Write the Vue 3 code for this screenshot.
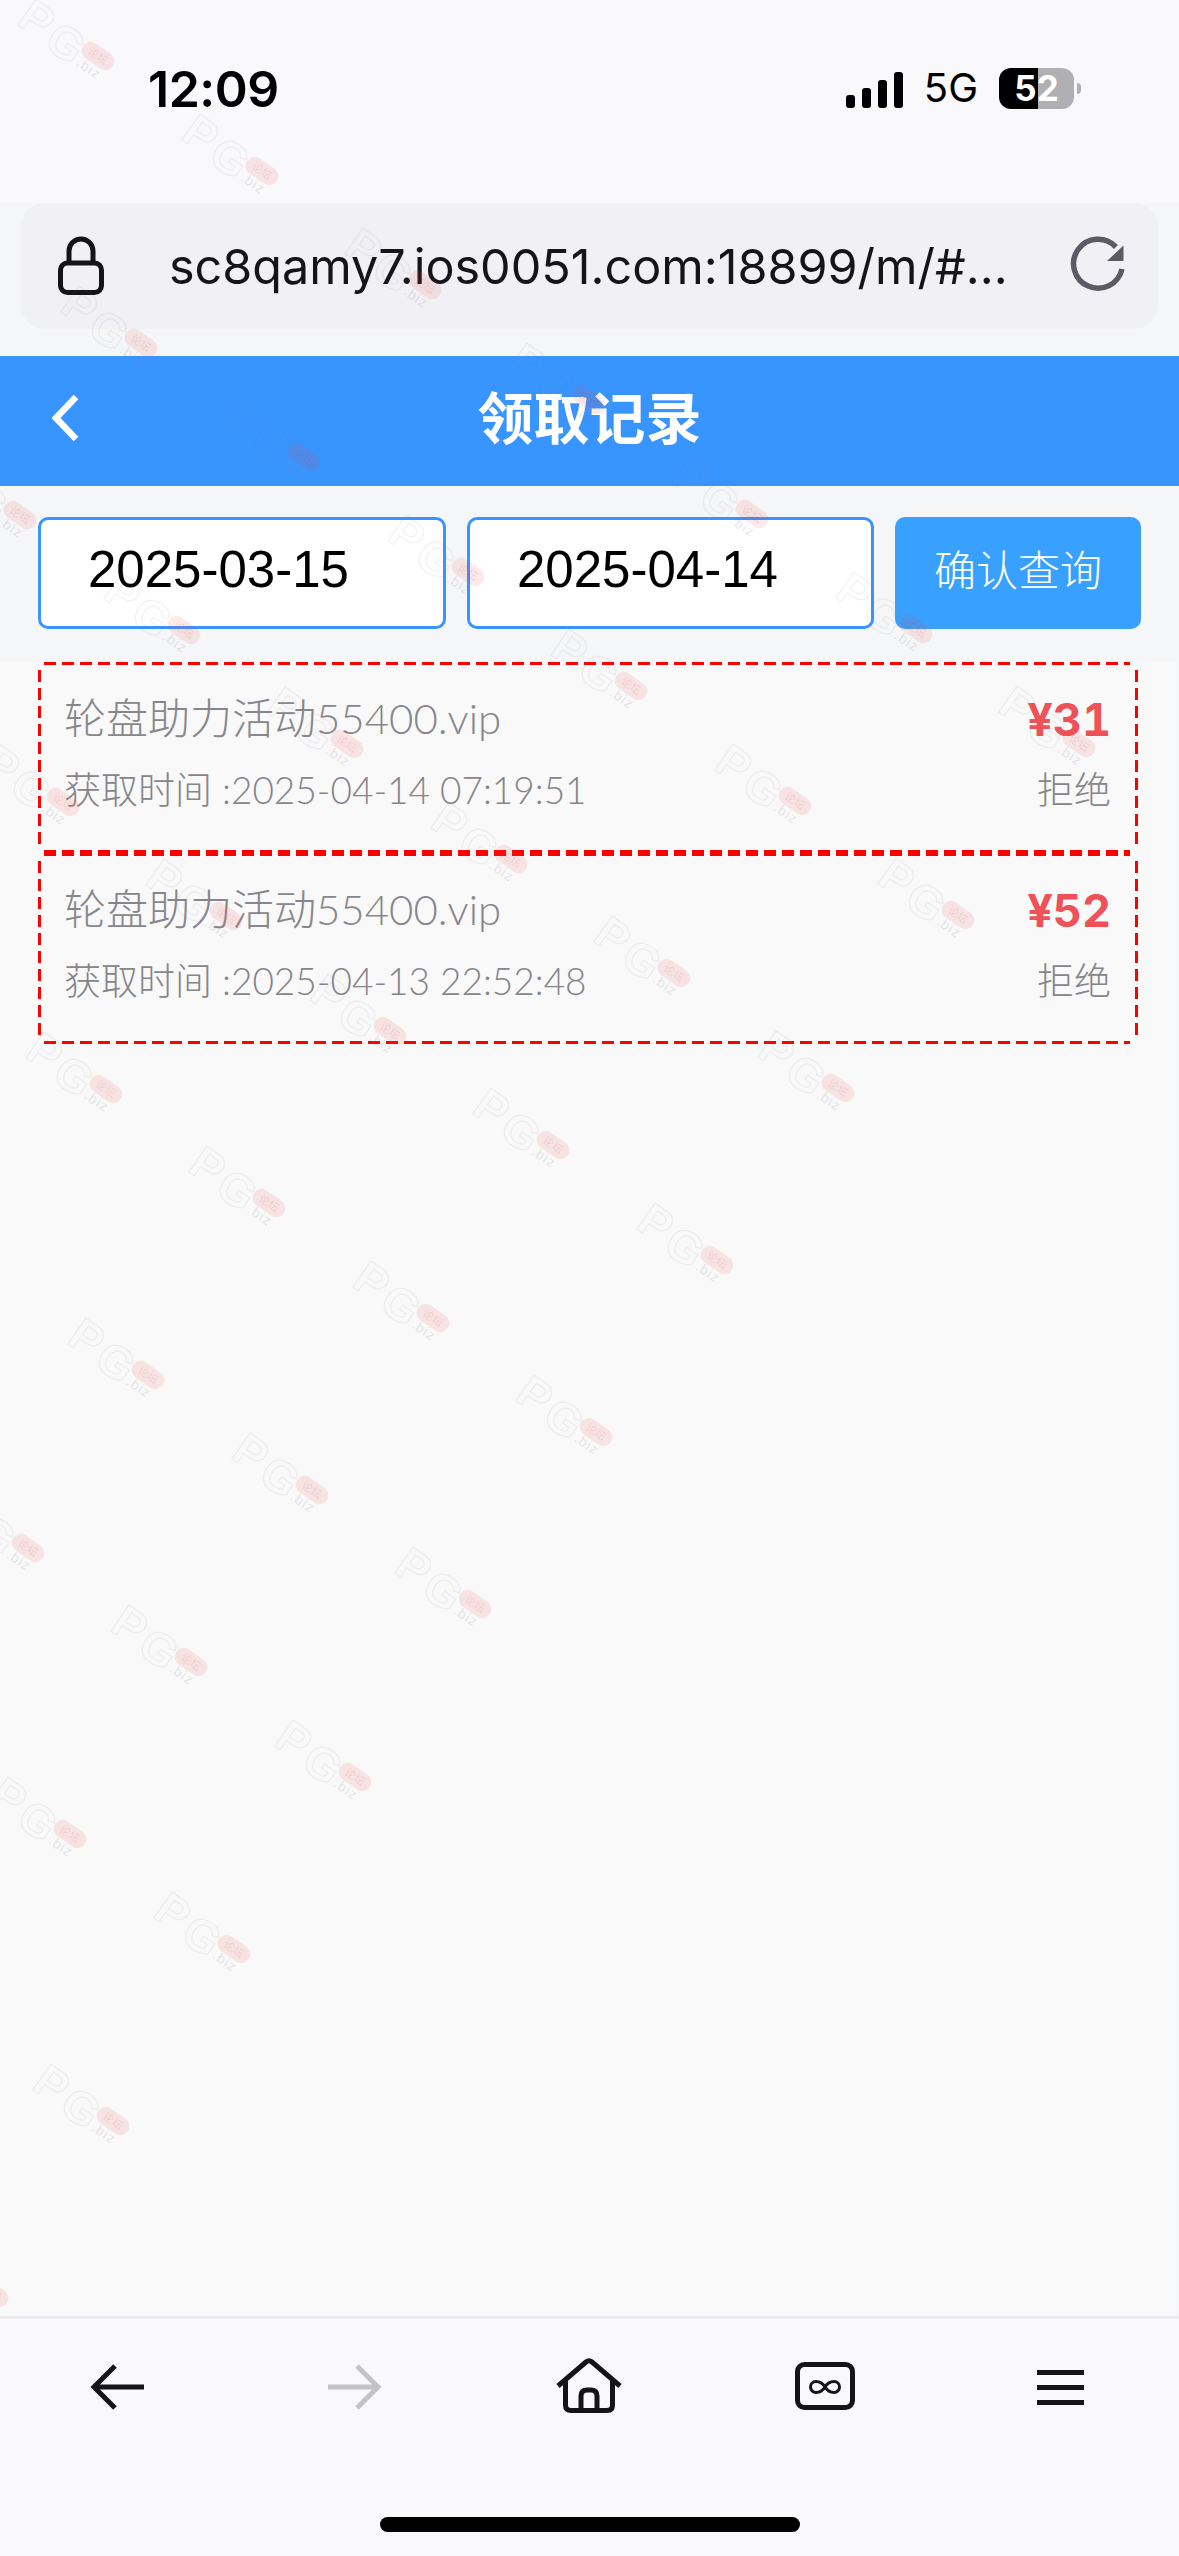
<template>
  <div class="page">
    <div class="status">
      <span class="time">12:09</span>
      <div class="status-right">
        <svg class="signal" width="58" height="36" viewBox="0 0 58 36">
          <rect x="0" y="23" width="9" height="13" rx="3" />
          <rect x="16" y="16" width="9" height="20" rx="3" />
          <rect x="32" y="8" width="9" height="28" rx="3" />
          <rect x="48" y="0" width="9" height="36" rx="3" />
        </svg>
        <span class="net">5G</span>
        <div class="battery"><span>52</span></div>
      </div>
    </div>

    <div class="urlbar">
      <svg class="lock" width="46" height="60" viewBox="0 0 46 60" fill="none" stroke="#141419" stroke-width="5">
        <path d="M11 28V16a12 12 0 0 1 24 0v12" />
        <rect x="2.5" y="28" width="41" height="29.5" rx="7" />
      </svg>
      <span class="url">sc8qamy7.ios0051.com:18899/m/#...</span>
      <svg class="reload" width="60" height="60" viewBox="0 0 60 60" fill="none">
        <path d="M53 33A24.5 24.5 0 1 1 47 11" stroke="#5b5b63" stroke-width="5.5" />
        <path d="M54.5 9.5V25H38Z" fill="#5b5b63" />
      </svg>
    </div>

    <div class="header">
      <svg class="back" width="34" height="52" viewBox="0 0 34 52" fill="none" stroke="#fff" stroke-width="6.5">
        <path d="M27 5L7 26l20 21" />
      </svg>
      <span class="title">领取记录</span>
    </div>

    <div class="filter">
      <input class="date first" type="text" value="2025-03-15" readonly />
      <input class="date second" type="text" value="2025-04-14" readonly />
      <button class="query">确认查询</button>
    </div>

    <div class="list">
      <div v-for="item in records" :key="item.time" class="record">
        <svg class="dashes" width="1100" height="191" viewBox="0 0 1100 191" fill="none" stroke="#f00" stroke-width="3">
          <path d="M6 1.500H1092" stroke-dasharray="12 6" />
          <path d="M6 189.500H1092" stroke-dasharray="12 6" />
          <path d="M1.500 8V182" stroke-dasharray="12 6" />
          <path d="M1098.500 8V182" stroke-dasharray="12 6" />
        </svg>
        <div class="line">
          <span class="name">轮盘助力活动55400.vip</span>
          <span class="amount">{{ item.amount }}</span>
        </div>
        <div class="line">
          <span class="sub">获取时间 :{{ item.time }}</span>
          <span class="sub">拒绝</span>
        </div>
      </div>
    </div>

    <div class="toolbar">
      <div class="tool">
        <svg width="56" height="48" viewBox="0 0 56 48" fill="none" stroke="#141419" stroke-width="5">
          <path d="M54 24H5" />
          <path d="M25 3L4 24l21 21" />
        </svg>
      </div>
      <div class="tool">
        <svg width="56" height="48" viewBox="0 0 56 48" fill="none" stroke="#c3c3c6" stroke-width="5">
          <path d="M2 24h49" />
          <path d="M31 3l21 21-21 21" />
        </svg>
      </div>
      <div class="tool">
        <svg class="home" width="68" height="56" viewBox="0 0 68 56" fill="none" stroke="#141419" stroke-width="5">
          <path d="M3 29L31 5q3-2.500 6 0l28 24" />
          <path d="M10.500 24v24q0 5.500 5.500 5.500h36q5.500 0 5.500-5.500V24" />
          <path d="M26 53V39q0-6 6-6h4q6 0 6 6v14" />
        </svg>
      </div>
      <div class="tool">
        <svg class="tabs" width="60" height="50" viewBox="0 0 60 50" fill="none" stroke="#141419">
          <rect x="2.500" y="3.500" width="55" height="43" rx="7" stroke-width="5" />
          <path d="M30 26c-3-5-7-5.500-9-5.500a5.500 5.500 0 0 0 0 11c2 0 6-.5 9-5.500s7-5.500 9-5.500a5.500 5.500 0 0 1 0 11c-2 0-6-.5-9-5.500Z" stroke-width="3" />
        </svg>
      </div>
      <div class="tool">
        <svg width="48" height="38" viewBox="0 0 48 38" fill="#141419">
          <rect x="0" y="2" width="47" height="5" />
          <rect x="0" y="17" width="47" height="5" />
          <rect x="0" y="32" width="47" height="5" />
        </svg>
      </div>
      <div class="home-bar"></div>
    </div>

    <div class="marks" aria-hidden="true">
      <div v-for="m in marks" :key="m.id" class="mark" :style="{ left: m.x + 'px', top: m.y + 'px' }">
        <span class="mark-letter mark-p">P</span>
        <span class="mark-letter mark-g">G</span>
        <span class="mark-pill">论坛</span>
        <span class="mark-biz">.biz</span>
      </div>
    </div>
  </div>
</template>

<script setup>
const records = [
  { amount: '¥31', time: '2025-04-14 07:19:51' },
  { amount: '¥52', time: '2025-04-13 22:52:48' }
]

// watermark lattice, 7 x 10 tiles, the ones fully off screen are dropped
const marks = []
for (let a = 0; a < 7; a++) {
  for (let b = 0; b < 10; b++) {
    const x = Math.round(19 + a * 163.5 - b * 120.75)
    const y = Math.round(5 + a * 114.5 + b * 172.25)
    if (x > -90 && x < 1179) {
      marks.push({ id: a + '-' + b, x, y })
    }
  }
}
</script>

<style>
html,
body {
  margin: 0;
  background: #f5f6f8;
}
</style>

<style scoped>
.page {
  position: relative;
  width: 1179px;
  height: 2556px;
  overflow: hidden;
  display: flex;
  flex-direction: column;
  background: #f5f6f8;
  font-family: "Liberation Sans", "Noto Sans CJK SC", sans-serif;
}

.status {
  height: 203px;
  box-sizing: border-box;
  padding: 67px 98px 0 148px;
  display: flex;
  justify-content: space-between;
  align-items: flex-start;
  background: #f9f9fb;
}

.time {
  font-family: Inter, sans-serif;
  font-weight: 600;
  font-size: 50px;
  line-height: 44px;
  color: #000;
  letter-spacing: -0.5px;
}

.status-right {
  display: flex;
  align-items: center;
  height: 44px;
  margin-top: -1px;
}

.signal {
  fill: #000;
  margin-top: 3px;
}

.net {
  font-family: Inter, sans-serif;
  font-size: 40px;
  line-height: 44px;
  margin-left: 20px;
  color: #000;
}

.battery {
  position: relative;
  width: 75px;
  height: 41px;
  margin-left: 21px;
  margin-right: 7px;
  border-radius: 12px;
  background: linear-gradient(90deg, #000 52%, #b0b0b2 52%);
  color: #fff;
  font-family: Inter, sans-serif;
  font-weight: 700;
  font-size: 35px;
  line-height: 41px;
  text-align: center;
}

.battery::after {
  content: "";
  position: absolute;
  left: 78px;
  top: 15px;
  width: 4px;
  height: 11px;
  border-radius: 0 6px 6px 0;
  background: #b0b0b2;
}

.urlbar {
  height: 126px;
  flex: none;
  margin: 0 21px;
  display: flex;
  align-items: center;
  border-radius: 24px;
  background: #f0f0f5;
  color: #141419;
}

.lock {
  margin-left: 37px;
  margin-top: -2px;
}

.url {
  margin-left: 65px;
  font-family: Inter, sans-serif;
  font-size: 48.5px;
  white-space: nowrap;
}

.reload {
  margin-left: auto;
  margin-right: 29px;
}

.header {
  position: relative;
  height: 130px;
  flex: none;
  margin-top: 27px;
  display: flex;
  align-items: center;
  justify-content: center;
  background: #3894ff;
}

.back {
  position: absolute;
  left: 49px;
  top: 36px;
}

.title {
  margin-bottom: 12px;
  color: #fff;
  font-family: "Noto Sans CJK SC", sans-serif;
  font-weight: 700;
  font-size: 56px;
  line-height: 100px;
}

.filter {
  height: 176px;
  flex: none;
  box-sizing: border-box;
  padding: 31px 38px 33px;
  display: flex;
  justify-content: space-between;
}

.date {
  height: 112px;
  box-sizing: border-box;
  margin: 0;
  padding: 0 0 8px 47px;
  border: 3px solid #3894ff;
  border-radius: 10px;
  background: #fff;
  color: #000;
  font-family: "Liberation Sans", sans-serif;
  font-size: 51px;
  outline: none;
}

.first {
  width: 408px;
}

.second {
  width: 407px;
}

.query {
  width: 246px;
  height: 112px;
  padding: 0 0 11px;
  border: none;
  border-radius: 10px;
  background: #38a0ff;
  color: #fff;
  font-family: "Noto Sans CJK SC", sans-serif;
  font-weight: 300;
  font-size: 42px;
}

.list {
  flex: 1;
  margin-right: 3px;
  padding-left: 38px;
  background: #f9f9fa;
}

.record {
  position: relative;
  width: 1100px;
  height: 191px;
  box-sizing: border-box;
  padding: 18px 27px 0 26px;
}

.dashes {
  position: absolute;
  left: 0;
  top: 0;
}

.line {
  height: 70px;
  display: flex;
  align-items: center;
  justify-content: space-between;
}

.name {
  font-family: Lato, "Noto Sans CJK SC", sans-serif;
  font-weight: 300;
  font-size: 42px;
  color: #87878b;
}

.sub {
  margin-top: 6px;
  font-family: Lato, "Noto Sans CJK SC", sans-serif;
  font-weight: 300;
  font-size: 37px;
  color: #85858a;
}

.amount {
  margin-top: 8px;
  font-family: Inter, sans-serif;
  font-weight: 700;
  font-size: 45px;
  font-variant-numeric: tabular-nums;
  color: #ef5159;
}

.toolbar {
  position: relative;
  height: 240px;
  flex: none;
  box-sizing: border-box;
  border-top: 3px solid #ebebef;
  display: grid;
  grid-template-columns: repeat(5, 1fr);
  background: #f9f9fb;
}

.tool {
  height: 136px;
  display: flex;
  align-items: center;
  justify-content: center;
}

.home {
  margin-top: -4px;
}

.tabs {
  margin-top: -2px;
}

.home-bar {
  position: absolute;
  left: 380px;
  top: 198px;
  width: 420px;
  height: 15px;
  border-radius: 8px;
  background: #000;
}

/* forum watermark sprinkled over the whole page */
.marks {
  position: absolute;
  inset: 0;
  overflow: hidden;
  pointer-events: none;
}

.mark {
  position: absolute;
  width: 96px;
  height: 76px;
}

.mark-letter,
.mark-pill,
.mark-biz {
  position: absolute;
  transform: translate(-50%, -50%) rotate(35deg);
  white-space: nowrap;
}

.mark-letter {
  font-family: "Liberation Sans", sans-serif;
  font-weight: 700;
  font-size: 46px;
  line-height: 46px;
  color: transparent;
  -webkit-text-stroke: 1.5px rgba(130, 130, 135, 0.1);
}

.mark-p {
  left: 18px;
  top: 14px;
}

.mark-g {
  left: 47px;
  top: 38px;
}

.mark-pill {
  left: 79px;
  top: 51px;
  width: 36px;
  height: 18px;
  border-radius: 9px;
  background: rgba(238, 70, 70, 0.12);
  color: rgba(200, 60, 60, 0.15);
  font-size: 11px;
  line-height: 18px;
  text-align: center;
}

.mark-biz {
  left: 70px;
  top: 63px;
  font-size: 14px;
  letter-spacing: 1px;
  color: rgba(130, 130, 135, 0.2);
}
</style>
